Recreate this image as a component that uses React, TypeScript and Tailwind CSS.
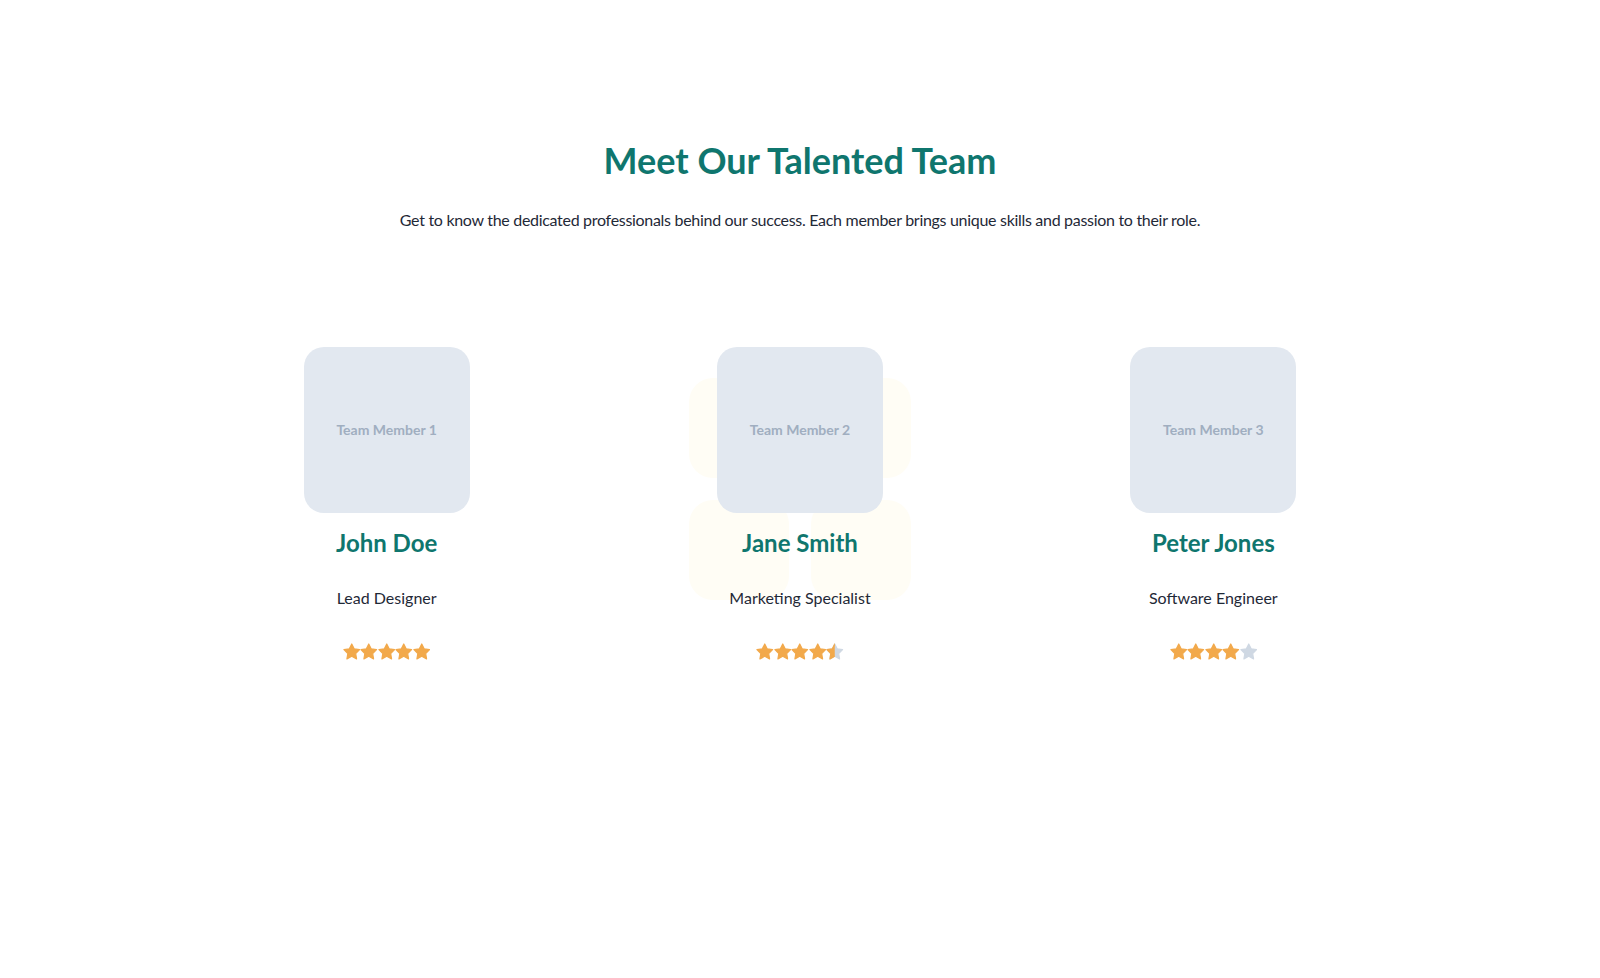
import type { ReactNode } from "react";

type Member = {
  name: string;
  role: string;
  label: string;
  rating: number;
};

const members: Member[] = [
  { name: "John Doe", role: "Lead Designer", label: "Team Member 1", rating: 5 },
  { name: "Jane Smith", role: "Marketing Specialist", label: "Team Member 2", rating: 4.5 },
  { name: "Peter Jones", role: "Software Engineer", label: "Team Member 3", rating: 4 },
];

const STAR = "M12 2.6l2.9 5.9 6.5.95-4.7 4.6 1.1 6.5L12 17.5l-5.8 3.05 1.1-6.5-4.7-4.6 6.5-.95z";

function Star({ fill }: { fill: "full" | "half" | "empty" }) {
  const on = "#f2a94b";
  const off = "#cfd8e3";
  return (
    <svg viewBox="1.5 1.5 21 21" className="h-[17.5px] w-[17.5px]">
      <defs>
        <clipPath id="half-left">
          <rect x="0" y="0" width="12" height="24" />
        </clipPath>
      </defs>
      <path d={STAR} fill={fill === "full" ? on : off} stroke={fill === "full" ? on : off} strokeWidth="1.4" strokeLinejoin="round" />
      {fill === "half" && (
        <path d={STAR} fill={on} stroke={on} strokeWidth="1.4" strokeLinejoin="round" clipPath="url(#half-left)" />
      )}
    </svg>
  );
}

function Rating({ value }: { value: number }) {
  return (
    <div className="flex items-center">
      {[1, 2, 3, 4, 5].map((i) => (
        <Star key={i} fill={value >= i ? "full" : value >= i - 0.5 ? "half" : "empty"} />
      ))}
    </div>
  );
}

// faint 2x2 tile pattern sitting behind the middle card
function Backdrop({ children }: { children: ReactNode }) {
  return (
    <div className="relative flex flex-col items-center">
      <div className="absolute top-[31px] left-1/2 grid w-[222px] -translate-x-1/2 grid-cols-[100px_100px] gap-[22px]">
        <div className="h-[100px] w-[100px] rounded-3xl bg-[#fffdf5]" />
        <div className="h-[100px] w-[100px] rounded-3xl bg-[#fffdf5]" />
        <div className="h-[100px] w-[100px] rounded-3xl bg-[#fffdf5]" />
        <div className="h-[100px] w-[100px] rounded-3xl bg-[#fffdf5]" />
      </div>
      {children}
    </div>
  );
}

function MemberCard({ member }: { member: Member }) {
  return (
    <div className="relative flex flex-col items-center">
      <div className="flex h-[166px] w-[166px] items-center justify-center rounded-[20px] bg-[#e2e8f0]">
        <span className="font-['Lato'] text-sm font-bold text-[#a0aec0]">{member.label}</span>
      </div>
      <h3 className="mt-[14px] text-2xl leading-8 font-bold text-[#0f766e]">{member.name}</h3>
      <p className="mt-[27px] text-base leading-6 text-[#1f2937]">{member.role}</p>
      <div className="mt-[33px]">
        <Rating value={member.rating} />
      </div>
    </div>
  );
}

export default function App() {
  return (
    <div className="min-h-screen bg-white font-['Lato',sans-serif]">
      <section className="flex flex-col items-center pt-[140px]">
        <h1 className="text-4xl leading-10 font-bold text-[#0f766e]">Meet Our Talented Team</h1>
        <p className="mt-7 text-base leading-6 tracking-[-0.3px] text-[#1f2937]">
          Get to know the dedicated professionals behind our success. Each member brings unique skills and passion to their role.
        </p>
        <div className="mt-[115px] grid w-[1200px] grid-cols-3 gap-10">
          {members.map((m, i) =>
            i === 1 ? (
              <Backdrop key={m.name}>
                <MemberCard member={m} />
              </Backdrop>
            ) : (
              <MemberCard key={m.name} member={m} />
            )
          )}
        </div>
      </section>
    </div>
  );
}
